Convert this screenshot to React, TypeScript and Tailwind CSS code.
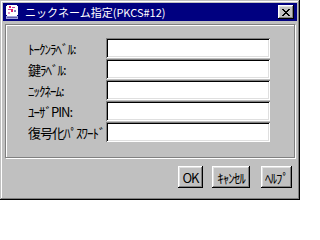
const raised =
  "shadow-[inset_-1px_-1px_#000,inset_1px_1px_#fff,inset_-2px_-2px_#808080,inset_2px_2px_#dfdfdf]";
const sunken =
  "shadow-[inset_1px_1px_#808080,inset_-1px_-1px_#fff,inset_2px_2px_#000,inset_-2px_-2px_#dfdfdf]";

const fields = [
  "ﾄｰｸﾝﾗﾍﾞﾙ:",
  "鍵ﾗﾍﾞﾙ:",
  "ﾆｯｸﾈｰﾑ:",
  "ﾕｰｻﾞPIN:",
  "復号化ﾊﾟｽﾜｰﾄﾞ",
];

const AppIcon = () => (
  <svg width="16" height="16" viewBox="0 0 16 16" shapeRendering="crispEdges">
    <rect x="3" y="1" width="10" height="11" fill="#fff" />
    <rect x="2" y="2" width="1" height="9" fill="#fff" />
    <rect x="13" y="2" width="1" height="9" fill="#fff" />
    <rect x="5" y="2" width="2" height="2" fill="#e0206a" />
    <rect x="8" y="3" width="3" height="1" fill="#c040a0" />
    <rect x="4" y="5" width="3" height="1" fill="#c040a0" />
    <rect x="7" y="5" width="2" height="3" fill="#e0206a" />
    <rect x="10" y="6" width="2" height="2" fill="#8080c0" />
    <rect x="4" y="8" width="2" height="2" fill="#e090c0" />
    <rect x="2" y="12" width="12" height="3" fill="#a0a0e0" />
    <rect x="3" y="13" width="10" height="1" fill="#6060a0" />
  </svg>
);

const CloseIcon = () => (
  <svg width="8" height="7" viewBox="0 0 8 7" shapeRendering="crispEdges">
    <path d="M0 0h2v1h1v1h2v-1h1v-1h2v1h-1v1h-1v1h-1v1h1v1h1v1h1v1h-2v-1h-1v-1h-2v1h-1v1h-2v-1h1v-1h1v-1h1v-1h-1v-1h-1v-1h-1z" fill="#000" />
  </svg>
);

const Button = ({ label, className }: { label: string; className: string }) => (
  <button
    className={`${raised} h-[22px] bg-[#c0c0c0] flex items-center justify-center text-[13px] tracking-[-1px] leading-none text-black ${className}`}
  >
    {label}
  </button>
);

export default function App() {
  return (
    <div
      className={`w-[300px] h-[200px] bg-[#c0c0c0] p-[3px] flex flex-col shadow-[inset_-1px_-1px_#000,inset_1px_1px_#c0c0c0,inset_-2px_-2px_#808080,inset_2px_2px_#fff] font-['Noto_Sans_CJK_JP','Liberation_Sans',sans-serif]`}
    >
      {/* title bar */}
      <div className="h-[18px] bg-[#000080] flex items-center pl-[1px] pr-[3px]">
        <AppIcon />
        <span className="ml-[5px] text-white text-[11px] leading-none">
          ニックネーム指定(PKCS#12)
        </span>
        <div
          className={`${raised} ml-auto w-[16px] h-[14px] bg-[#c0c0c0] flex items-center justify-center`}
        >
          <CloseIcon />
        </div>
      </div>

      {/* group box */}
      <div className="mt-[3px] ml-[2px] w-[290px] h-[134px] border border-[#808080] shadow-[inset_1px_1px_#fff,1px_1px_#fff] pt-[13px] pl-[22px]">
        <div className="grid grid-cols-[78px_164px] gap-y-[1px]">
          {fields.map((label) => (
            <div key={label} className="contents">
              <div className="h-[20px] flex items-center text-[13px] tracking-[-1px] leading-none text-black whitespace-nowrap overflow-hidden">
                {label}
              </div>
              <div className={`${sunken} h-[20px] bg-white`} />
            </div>
          ))}
        </div>
      </div>

      {/* buttons */}
      <div className="mt-[8px] flex justify-end pr-[5px]">
        <Button label="OK" className="w-[25px]" />
        <Button label="ｷｬﾝｾﾙ" className="ml-[9px] w-[38px]" />
        <Button label="ﾍﾙﾌﾟ" className="ml-[11px] w-[31px]" />
      </div>
    </div>
  );
}
